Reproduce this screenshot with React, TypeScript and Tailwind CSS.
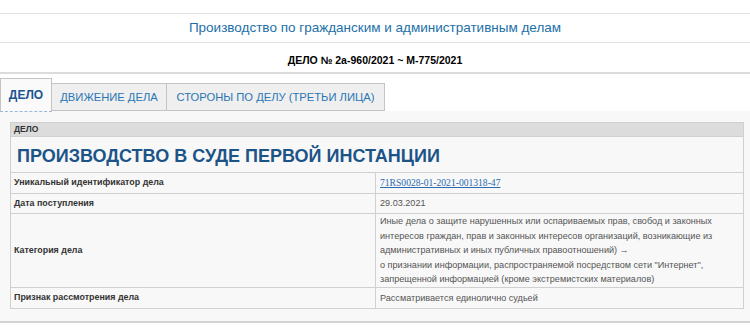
export default function App() {
  const rows: { label: string; value: React.ReactNode; h: string }[] = [
    {
      label: "Уникальный идентификатор дела",
      h: "h-[21px]",
      value: (
        <a href="#" className="text-[#2a6ab0] underline font-['Liberation_Serif',serif] text-[9.6px]">
          71RS0028-01-2021-001318-47
        </a>
      ),
    },
    { label: "Дата поступления", h: "h-[20px]", value: "29.03.2021" },
    {
      label: "Категория дела",
      h: "h-[74px]",
      value: (
        <>
          Иные дела о защите нарушенных или оспариваемых прав, свобод и законных интересов граждан, прав и
          законных интересов организаций, возникающие из административных и иных публичных правоотношений) →
          <br />
          о признании информации, распространяемой посредством сети "Интернет", запрещенной информацией (кроме
          экстремистских материалов)
        </>
      ),
    },
    { label: "Признак рассмотрения дела", h: "h-[21px]", value: "Рассматривается единолично судьей" },
  ];

  return (
    <div className="w-[750px] h-[331px] overflow-hidden bg-white font-['Liberation_Sans',Arial,sans-serif]">
      <div className="h-[14px] border-b border-[#e2e2e2]" />
      <div className="h-[29px] flex items-center justify-center text-[13.5px] text-[#2270a8] border-b border-[#e2e2e2]">
        Производство по гражданским и административным делам
      </div>
      <div className="h-[31px] flex items-end justify-center pb-[3px] text-[10.5px] font-bold text-black border-b-2 border-[#dcdcdc]">
        ДЕЛО № 2а-960/2021 ~ М-775/2021
      </div>

      <div className="flex items-end h-[37px] pt-[3px]">
        <div className="h-[34px] w-[52px] flex items-center justify-center border border-[#c4c4c4] border-b-[#9ab8d8] bg-[#fafafa] text-[12px] font-bold text-[#1a5590] relative z-10 -mb-[1px] [border-bottom-style:dashed]">
          ДЕЛО
        </div>
        <div className="h-[28px] w-[115px] flex items-center justify-center border border-l-0 border-[#c4c4c4] bg-[#efefef] text-[11.2px] text-[#2a76b4]">
          ДВИЖЕНИЕ ДЕЛА
        </div>
        <div className="h-[28px] w-[218px] flex items-center justify-center border border-l-0 border-[#c4c4c4] bg-[#efefef] text-[11.2px] text-[#2a76b4]">
          СТОРОНЫ ПО ДЕЛУ (ТРЕТЬИ ЛИЦА)
        </div>
      </div>

      <div className="bg-[#f8f8f8] pt-[11px] pb-[12px] pl-[10px] pr-[6px] border-b-2 border-[#d4d4d4]">
        <table className="w-[734px] border-collapse border border-[#d0d0d0] table-fixed">
          <colgroup>
            <col className="w-[365px]" />
            <col />
          </colgroup>
          <thead>
            <tr>
              <th colSpan={2} className="bg-[#dcdcdc] h-[14px] px-[3px] text-left text-[8.5px] font-bold text-[#333] leading-none border border-[#d0d0d0]">
                ДЕЛО
              </th>
            </tr>
          </thead>
          <tbody>
            <tr>
              <td colSpan={2} className="h-[36px] px-[6px] pt-[2px] text-[18px] font-bold text-[#1c5488] leading-none border border-[#d0d0d0]">
                ПРОИЗВОДСТВО В СУДЕ ПЕРВОЙ ИНСТАНЦИИ
              </td>
            </tr>
            {rows.map((r) => (
              <tr key={r.label}>
                <td className={`${r.h} px-[3px] text-[8.9px] font-bold text-[#333] border border-[#d0d0d0] align-middle`}>
                  {r.label}
                </td>
                <td className="px-[4px] py-0 text-[9.1px] leading-[14.4px] text-[#555] border border-[#d0d0d0] align-middle">
                  {r.value}
                </td>
              </tr>
            ))}
          </tbody>
        </table>
      </div>
    </div>
  );
}
